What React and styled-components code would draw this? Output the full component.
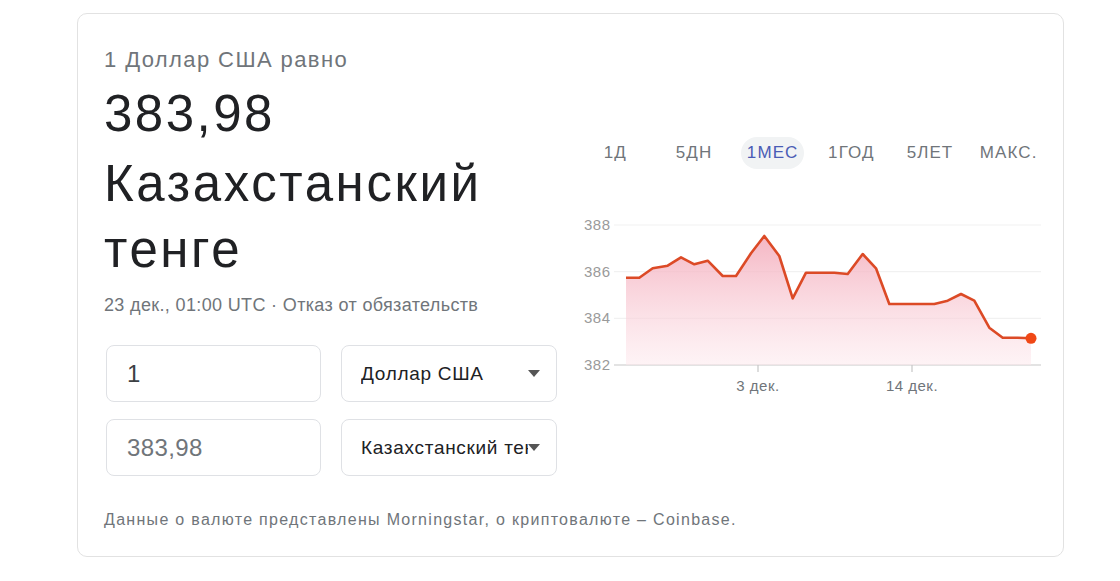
import React from "react";
import styled, { createGlobalStyle } from "styled-components";

const GlobalStyle = createGlobalStyle`
  body {
    margin: 0;
    background: #fff;
    font-family: "Liberation Sans", Arial, sans-serif;
  }
`;

const ranges = ["1Д", "5ДН", "1МЕС", "1ГОД", "5ЛЕТ", "МАКС."];

const points = [
  [50, 67.7], [63.3, 67.7], [76.7, 58.3], [91.7, 55.7], [105, 47.3],
  [118.3, 54.3], [131.7, 50.7], [146.7, 66], [160, 66], [175, 43.3],
  [188.3, 26], [203.3, 46], [216.7, 88.3], [230, 62.7], [243.3, 62.7],
  [258.3, 62.7], [271.7, 64], [286.7, 44], [300, 58.3], [313.3, 94],
  [328.3, 94], [343.3, 94], [358.3, 94], [371.7, 90.7], [385, 84],
  [398.3, 90.7], [413.3, 117.7], [426.7, 127.7], [441.7, 127.7], [455, 128.3],
];

const yTicks = [
  { label: "388", y: 15 },
  { label: "386", y: 61.7 },
  { label: "384", y: 108.3 },
  { label: "382", y: 155 },
];

const AxisText = styled.text`
  font-family: "Liberation Sans", Arial, sans-serif;
  font-size: 15px;
  letter-spacing: 0.5px;
  fill: ${(p) => (p.light ? "#9a9a9a" : "#70757a")};
`;

const Chart = () => {
  const line = points.map(([x, y]) => `${x},${y}`).join(" ");
  const last = points[points.length - 1];
  const area = `M${points[0][0]},155 L${line.split(" ").join(" L")} L${last[0]},155 Z`;
  return (
    <svg width="472" height="190" viewBox="0 0 472 190">
      <defs>
        <linearGradient id="fill" x1="0" y1="0" x2="0" y2="1">
          <stop offset="0" stopColor="#f3a9b9" stopOpacity="0.85" />
          <stop offset="1" stopColor="#fde7ec" stopOpacity="0.5" />
        </linearGradient>
      </defs>
      {yTicks.map((t) => (
        <g key={t.label}>
          <line x1="38" x2="465" y1={t.y} y2={t.y} stroke={t.y === 155 ? "#c7c7c7" : "#f1f1f1"} strokeWidth="1.2" />
          <AxisText light x="8" y={t.y + 5}>
            {t.label}
          </AxisText>
        </g>
      ))}
      <line x1="182" x2="182" y1="155" y2="162" stroke="#c7c7c7" strokeWidth="1.2" />
      <line x1="336" x2="336" y1="155" y2="162" stroke="#c7c7c7" strokeWidth="1.2" />
      <AxisText x="182" y="181" textAnchor="middle">3 дек.</AxisText>
      <AxisText x="336" y="181" textAnchor="middle">14 дек.</AxisText>
      <path d={area} fill="url(#fill)" />
      <polyline points={line} fill="none" stroke="#dc4a26" strokeWidth="2.6" strokeLinejoin="round" />
      <circle cx={last[0]} cy={last[1]} r="5.5" fill="#f04816" />
    </svg>
  );
};

const Arrow = () => (
  <svg width="12" height="7" viewBox="0 0 12 7">
    <path d="M0 0 L12 0 L6 7 Z" fill="#555" />
  </svg>
);

const App = () => (
  <>
    <GlobalStyle />
    <Card>
      <Left>
        <Subtitle>1 Доллар США равно</Subtitle>
        <Amount>383,98</Amount>
        <Currency>Казахстанский тенге</Currency>
        <Meta>23 дек., 01:00 UTC · Отказ от обязательств</Meta>
        <Converter>
          <Field>
            <Value>1</Value>
          </Field>
          <Select>
            <SelectText>Доллар США</SelectText>
            <Arrow />
          </Select>
          <Field>
            <Value muted>383,98</Value>
          </Field>
          <Select>
            <SelectText>Казахстанский тенге</SelectText>
            <Arrow />
          </Select>
        </Converter>
      </Left>
      <Right>
        <Tabs>
          {ranges.map((r) => (
            <Tab key={r}>
              <TabLabel active={r === "1МЕС"}>{r}</TabLabel>
            </Tab>
          ))}
        </Tabs>
        <ChartWrap>
          <Chart />
        </ChartWrap>
      </Right>
      <Footer>Данные о валюте представлены Morningstar, о криптовалюте – Coinbase.</Footer>
    </Card>
  </>
);

const Card = styled.div`
  margin: 13px 0 0 77px;
  width: 987px;
  height: 544px;
  box-sizing: border-box;
  border: 1px solid #e2e2e2;
  border-radius: 10px;
  padding: 33px 17px 0 26px;
  display: grid;
  grid-template-columns: 452px 1fr;
  column-gap: 20px;
  grid-template-rows: auto 1fr;
`;

const Left = styled.div`
  display: flex;
  flex-direction: column;
`;

const Subtitle = styled.div`
  font-size: 22px;
  line-height: 26px;
  letter-spacing: 1.4px;
  color: #70757a;
`;

const Amount = styled.div`
  font-size: 51px;
  line-height: 60px;
  letter-spacing: 2.5px;
  color: #202124;
  margin-top: 11px;
`;

const Currency = styled.div`
  font-size: 51px;
  line-height: 66px;
  letter-spacing: 2.6px;
  color: #202124;
  margin-top: 7px;
`;

const Meta = styled.div`
  font-size: 18px;
  line-height: 22px;
  letter-spacing: 0.35px;
  color: #70757a;
  margin-top: 11px;
`;

const Converter = styled.div`
  display: grid;
  grid-template-columns: 215px 216px;
  grid-auto-rows: 57px;
  column-gap: 20px;
  row-gap: 17px;
  margin-top: 29px;
  padding-left: 2px;
`;

const Field = styled.div`
  box-sizing: border-box;
  border: 1px solid #dfe1e5;
  border-radius: 8px;
  display: flex;
  align-items: center;
  padding: 0 20px;
`;

const Value = styled.span`
  font-size: 24px;
  letter-spacing: 0.4px;
  color: ${(p) => (p.muted ? "#70757a" : "#3c4043")};
`;

const Select = styled(Field)`
  padding: 0 16px 0 19px;
`;

const SelectText = styled.span`
  flex: 1;
  min-width: 0;
  overflow: hidden;
  white-space: nowrap;
  font-size: 19px;
  letter-spacing: 0.7px;
  color: #202124;
`;

const Right = styled.div`
  display: flex;
  flex-direction: column;
  padding-top: 90px;
`;

const Tabs = styled.div`
  display: grid;
  grid-template-columns: repeat(6, 1fr);
  justify-items: center;
`;

const Tab = styled.div`
  display: flex;
  justify-content: center;
`;

const TabLabel = styled.span`
  font-size: 17px;
  line-height: 32px;
  letter-spacing: 1.1px;
  padding: 0 6px;
  border-radius: 16px;
  color: ${(p) => (p.active ? "#4a5cb5" : "#70757a")};
  background: ${(p) => (p.active ? "#f1f3f4" : "transparent")};
`;

const ChartWrap = styled.div`
  margin-top: 41px;
`;

const Footer = styled.div`
  grid-column: 1 / -1;
  align-self: end;
  margin-bottom: 26px;
  font-size: 16px;
  line-height: 20px;
  letter-spacing: 1.3px;
  color: #70757a;
`;

export default App;
